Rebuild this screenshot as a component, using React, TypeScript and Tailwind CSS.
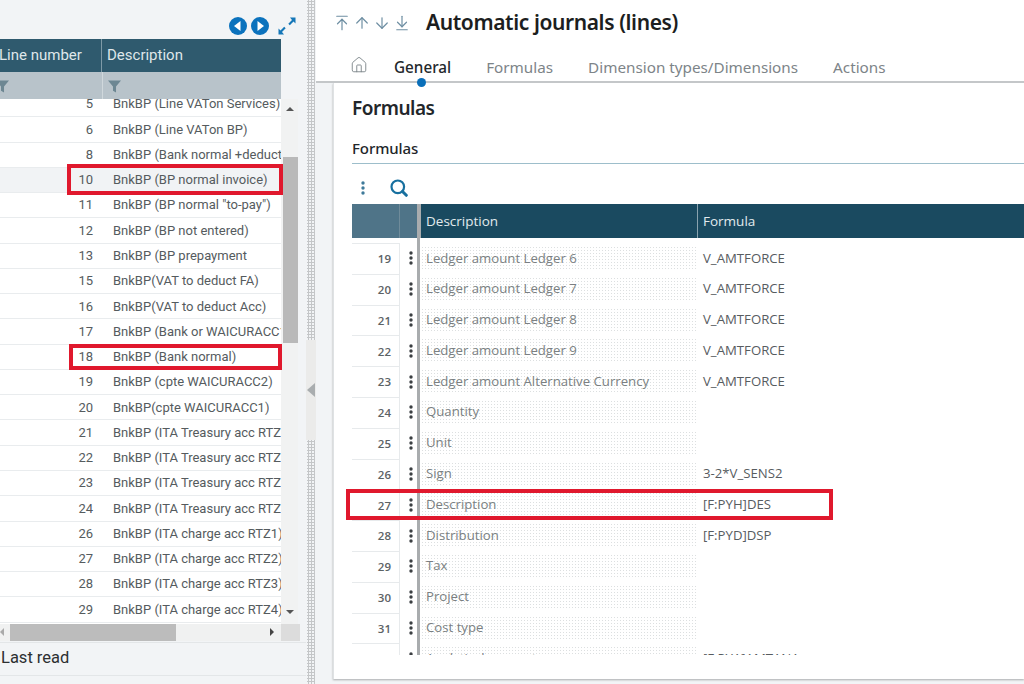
import { ArrowUpToLine, ArrowUp, ArrowDown, ArrowDownToLine, Home } from "lucide-react";

const leftRows: [string, string][] = [
  ["5", "BnkBP (Line VATon Services)"],
  ["6", "BnkBP (Line VATon BP)"],
  ["8", "BnkBP (Bank normal +deduction)"],
  ["10", "BnkBP (BP normal invoice)"],
  ["11", 'BnkBP (BP normal "to-pay")'],
  ["12", "BnkBP (BP not entered)"],
  ["13", "BnkBP (BP prepayment"],
  ["15", "BnkBP(VAT to deduct FA)"],
  ["16", "BnkBP(VAT to deduct Acc)"],
  ["17", "BnkBP (Bank or WAICURACC1)"],
  ["18", "BnkBP (Bank normal)"],
  ["19", "BnkBP (cpte WAICURACC2)"],
  ["20", "BnkBP(cpte WAICURACC1)"],
  ["21", "BnkBP (ITA Treasury acc RTZ1)"],
  ["22", "BnkBP (ITA Treasury acc RTZ2)"],
  ["23", "BnkBP (ITA Treasury acc RTZ3)"],
  ["24", "BnkBP (ITA Treasury acc RTZ4)"],
  ["26", "BnkBP (ITA charge acc RTZ1)"],
  ["27", "BnkBP (ITA charge acc RTZ2)"],
  ["28", "BnkBP (ITA charge acc RTZ3)"],
  ["29", "BnkBP (ITA charge acc RTZ4)"],
];

const rightRows: [string, string, string][] = [
  ["19", "Ledger amount Ledger 6", "V_AMTFORCE"],
  ["20", "Ledger amount Ledger 7", "V_AMTFORCE"],
  ["21", "Ledger amount Ledger 8", "V_AMTFORCE"],
  ["22", "Ledger amount Ledger 9", "V_AMTFORCE"],
  ["23", "Ledger amount Alternative Currency", "V_AMTFORCE"],
  ["24", "Quantity", ""],
  ["25", "Unit", ""],
  ["26", "Sign", "3-2*V_SENS2"],
  ["27", "Description", "[F:PYH]DES"],
  ["28", "Distribution", "[F:PYD]DSP"],
  ["29", "Tax", ""],
  ["30", "Project", ""],
  ["31", "Cost type", ""],
  ["32", "Analytical amount", "[F:PYA]AMTANA"],
];

function Funnel({ className }: { className: string }) {
  return (
    <svg viewBox="0 0 12 12" className={className}>
      <path d="M0 0.5h12L7.4 6v5.5L4.6 10V6z" fill="#6d8793" />
    </svg>
  );
}

function Kebab({ color }: { color: string }) {
  return (
    <svg viewBox="0 0 4 14" className="w-[4px] h-[14px]">
      <circle cx="2" cy="2" r="1.7" fill={color} />
      <circle cx="2" cy="7" r="1.7" fill={color} />
      <circle cx="2" cy="12" r="1.7" fill={color} />
    </svg>
  );
}

export default function App() {
  return (
    <div className="flex w-[1024px] h-[684px] overflow-hidden bg-white font-['Roboto',sans-serif]">
      {/* Left panel */}
      <div className="w-[306px] shrink-0 flex flex-col bg-[#f2f4f6]">
        <div className="h-[39px] flex items-center justify-end gap-[4px] pr-[10px] pt-[13px]">
          <svg viewBox="0 0 18 18" className="w-[18px] h-[18px]">
            <circle cx="9" cy="9" r="9" fill="#0b72bd" />
            <path d="M11.5 4v10L5 9z" fill="#fff" />
          </svg>
          <svg viewBox="0 0 18 18" className="w-[18px] h-[18px]">
            <circle cx="9" cy="9" r="9" fill="#0b72bd" />
            <path d="M6.5 4v10L13 9z" fill="#fff" />
          </svg>
          <svg viewBox="0 0 18 18" className="w-[18px] h-[18px] ml-[5px]">
            <path d="M17.5 0.5v6l-2-2-3.7 3.7-1.5-1.5L14 3l-2-2.5zM0.5 17.5v-6l2 2 3.7-3.7 1.5 1.5L4 15l2 2.5z" fill="#1577b8" />
          </svg>
        </div>
        <div className="w-[281px] h-[33px] flex bg-[#2f5a6e] text-[#dfe7ea] text-[15px]">
          <div className="w-[102px] flex items-center whitespace-nowrap -ml-px pl-0">Line number</div>
          <div className="flex-1 flex items-center pl-[5px] border-l border-[#7f9aa7]">Description</div>
        </div>
        <div className="w-[281px] h-[27px] flex bg-[#b8c3ca]">
          <div className="w-[102px] flex items-center overflow-hidden">
            <Funnel className="w-[13px] h-[13px] -ml-[4px] mt-[2px]" />
          </div>
          <div className="flex-1 flex items-center pl-[5px] border-l border-[#d0d8dc]">
            <Funnel className="w-[13px] h-[13px] mt-[2px]" />
          </div>
        </div>
        <div className="flex h-[525px]">
          <div className="w-[281px] h-full overflow-hidden bg-white">
            <div className="-mt-[7px]">
              {leftRows.map(([n, d]) => (
                <div
                  key={n}
                  className={`relative flex h-[25.27px] items-center border-b border-[#e9ecee] text-[13px] text-[#555b5e] whitespace-nowrap ${
                    n === "10" ? "bg-[#f1f3f5]" : ""
                  }`}
                >
                  <div className="w-[93px] text-right shrink-0">{n}</div>
                  <div className="ml-[20px] overflow-hidden">{d}</div>
                </div>
              ))}
            </div>
          </div>
          <div className="w-[17px] h-full bg-[#f1f2f2] flex flex-col items-center relative">
            <svg viewBox="0 0 8 4" className="w-[8px] h-[4px] mt-[8px]">
              <path d="M4 0l4 4H0z" fill="#555" />
            </svg>
            <div className="w-[15px] h-[186px] ml-[2px] mt-[46px] bg-[#b9b9b9]" />
            <svg viewBox="0 0 8 4" className="w-[8px] h-[4px] mt-[267px]">
              <path d="M4 4l4-4H0z" fill="#555" />
            </svg>
          </div>
        </div>
        <div className="h-[17px] flex w-[300px] items-stretch">
          <div className="w-[281px] bg-[#f0f1f1] flex items-center relative">
            <div className="absolute left-[10px] top-0 w-[166px] h-full bg-[#bcbcbc]" />
            <svg viewBox="0 0 4 8" className="w-[4px] h-[8px] absolute left-0 top-[4px]">
              <path d="M0 4l4-4v8z" fill="#aaa" />
            </svg>
            <svg viewBox="0 0 4 8" className="w-[4px] h-[8px] absolute left-[270px] top-[4px]">
              <path d="M4 4L0 0v8z" fill="#444" />
            </svg>
          </div>
          <div className="w-[19px] bg-[#dcdcdc]" />
        </div>
        <div className="h-[34px] mt-[1px] pb-[2px] flex items-center border-t border-b border-[#e3e6e8] pl-px text-[16.5px] text-[#2c2f31]">
          Last read
        </div>
      </div>

      {/* Splitter */}
      <div className="w-[10px] shrink-0 flex flex-col bg-[#f2f4f6]">
        <div className="h-[340px] mx-[1px] bg-[radial-gradient(#c4c6c8_1px,transparent_1.2px)] bg-[length:3px_3px]" />
        <div className="h-[100px] bg-[#ebebea] flex items-center justify-center">
          <svg viewBox="0 0 8 14" className="w-[8px] h-[14px]">
            <path d="M0 7l8-7v14z" fill="#a9adaf" />
          </svg>
        </div>
        <div className="flex-1 mx-[1px] bg-[radial-gradient(#c4c6c8_1px,transparent_1.2px)] bg-[length:3px_3px]" />
      </div>

      {/* Right panel */}
      <div className="flex-1 min-w-0 flex flex-col bg-[#f2f4f6] font-['Open_Sans',sans-serif]">
        <div className="h-[83px] shrink-0 bg-white border-b-2 border-[#c4c7c9] relative">
          <div className="flex items-center h-[46px] pl-[17px]">
            <div className="flex items-center gap-[2px] text-[#6f8fa3]">
              <ArrowUpToLine size={18} strokeWidth={1.6} />
              <ArrowUp size={18} strokeWidth={1.6} />
              <ArrowDown size={18} strokeWidth={1.6} />
              <ArrowDownToLine size={18} strokeWidth={1.6} />
            </div>
            <h1 className="ml-[15px] text-[21px] tracking-[-0.4px] font-semibold text-[#1c1e20] whitespace-nowrap font-['Noto_Sans',sans-serif]">
              Automatic journals (lines)
            </h1>
          </div>
          <div className="flex items-center h-[34px] pl-[34px] pt-[8px] text-[15.25px] text-[#7d8488] whitespace-nowrap font-['Noto_Sans',sans-serif]">
            <Home size={18} strokeWidth={1.2} className="text-[#7b8388] -mt-[4px]" />
            <span className="ml-[26px] text-[#23282b] font-medium">General</span>
            <span className="ml-[35px]">Formulas</span>
            <span className="ml-[35px]">Dimension types/Dimensions</span>
            <span className="ml-[35px]">Actions</span>
          </div>
          <div className="absolute left-[101px] top-[78px] w-[9px] h-[9px] rounded-full bg-[#0a6fb9]" />
        </div>
        <div className="flex-1 min-h-0 pl-[17px] pb-[5px]">
          <div className="h-full bg-white border-l border-[#dfe2e4] shadow-[0_1px_2px_rgba(0,0,0,0.3)] pl-[18px] flex flex-col overflow-hidden">
            <h2 className="mt-[11px] text-[19px] tracking-[-0.5px] leading-[28px] font-semibold text-[#22262a] font-['Noto_Sans',sans-serif]">
              Formulas
            </h2>
            <h3 className="mt-[14px] text-[15px] tracking-[-0.1px] leading-[24px] font-medium text-[#22262a] border-b border-[#9dbecb] pb-[3px] font-['Noto_Sans',sans-serif]">
              Formulas
            </h3>
            <div className="h-[40px] flex items-center pl-[9px] pt-[8px]">
              <Kebab color="#3f7a9a" />
              <svg viewBox="0 0 18 18" className="ml-[25px] w-[18px] h-[18px]">
                <circle cx="7.8" cy="7.8" r="6.3" fill="none" stroke="#18709f" strokeWidth="2.2" />
                <path d="M12.5 12.5L16.3 16.3" stroke="#18709f" strokeWidth="3" strokeLinecap="round" />
              </svg>
            </div>
            <div className="h-[34px] shrink-0 flex text-[#e2eaee] text-[13.5px]">
              <div className="w-[48px] bg-[#4f7488] border-r border-[#6f8b9a]" />
              <div className="w-[17px] bg-[#4f7488]" />
              <div className="w-[4px] bg-[#a9acae]" />
              <div className="w-[277px] bg-[#1a4a60] flex items-center pl-[5px] border-r border-[#8aa3af]">Description</div>
              <div className="flex-1 bg-[#1a4a60] flex items-center pl-[5px]">Formula</div>
            </div>
            <div className="h-[417px] overflow-hidden">
              <div className="flex h-[5px]">
                <div className="w-[65px]" />
                <div className="w-[3px] bg-[#a9acae]" />
              </div>
              {rightRows.map(([n, d, f]) => (
                <div key={n} className="flex h-[30.8px] text-[13.2px] text-[#7a7f82] whitespace-nowrap">
                  <div className="w-[48px] flex items-center justify-end pr-[8px] text-[11.5px] font-semibold text-[#5c6265] border-t border-[#e7eaec] border-r">
                    {n}
                  </div>
                  <div className="w-[17px] flex items-center justify-center pl-[4px]">
                    <Kebab color="#3b3f42" />
                  </div>
                  <div className="w-[3px] bg-[#a9acae]" />
                  <div className="w-[275px] ml-[1px] my-[3px] flex items-center pl-[5px] bg-[radial-gradient(#dcdfe0_0.8px,transparent_1px)] bg-[length:3px_3px]">
                    {d}
                  </div>
                  <div className={`pl-[7px] flex items-center ${f ? "text-[#575c5f]" : ""}`}>{f}</div>
                </div>
              ))}
            </div>
          </div>
        </div>
      </div>

      {/* Red annotation boxes */}
      <div className="absolute left-[67px] top-[164px] w-[216px] h-[31px] border-[4px] border-[#e0182d]" />
      <div className="absolute left-[69px] top-[344px] w-[213px] h-[26px] border-[4px] border-[#e0182d]" />
      <div className="absolute left-[346px] top-[489px] w-[487px] h-[31px] border-[4px] border-[#e0182d]" />
    </div>
  );
}
